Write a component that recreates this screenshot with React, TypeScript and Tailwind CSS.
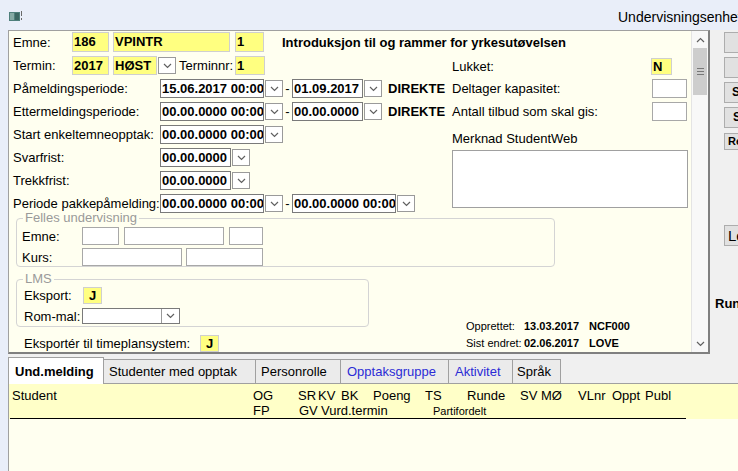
import React from "react";

function Chev({ up = false }: { up?: boolean }) {
  return (
    <svg width="9" height="6" viewBox="0 0 9 6" className="block">
      <path
        d={up ? "M1 5L4.5 1.5L8 5" : "M1 1L4.5 4.5L8 1"}
        fill="none"
        stroke="#606060"
        strokeWidth="1.2"
      />
    </svg>
  );
}

function DropBtn() {
  return (
    <div className="flex h-[17px] w-[18px] shrink-0 items-center justify-center border border-[#9a9a9a] bg-white">
      <Chev />
    </div>
  );
}

function DateF({ v, w }: { v: string; w: string }) {
  return (
    <div className="flex items-center gap-[1px]">
      <div
        className={`${w} h-[19px] overflow-hidden whitespace-nowrap border border-[#7a7a7a] bg-white pl-[1px] font-bold leading-[17px]`}
      >
        {v}
      </div>
      <DropBtn />
    </div>
  );
}

function Yel({ v, w, h, lh }: { v: string; w: string; h: string; lh: string }) {
  return (
    <div
      className={`${w} ${h} ${lh} shrink-0 border border-[#cfcfcf] bg-[#ffff80] pl-[1px] font-bold`}
    >
      {v}
    </div>
  );
}

function Box({ w, h }: { w: string; h: string }) {
  return <div className={`${w} ${h} shrink-0 border border-[#a8a8a8] bg-white`} />;
}

function Row({ label, children }: { label: string; children?: React.ReactNode }) {
  return (
    <div className="flex h-[19px] items-center">
      <span className="w-[147px] shrink-0 whitespace-nowrap">{label}</span>
      {children}
    </div>
  );
}

function Dash() {
  return <span className="w-[9px] shrink-0 text-center">-</span>;
}

function Tab({
  label,
  w,
  pl,
  color,
}: {
  label: string;
  w: string;
  pl: string;
  color: string;
}) {
  return (
    <div
      className={`${w} ${pl} ${color} flex h-[25px] shrink-0 items-center border-b border-r border-t border-[#a0a0a0] bg-[#ebebeb] whitespace-nowrap`}
    >
      {label}
    </div>
  );
}

export default function App() {
  return (
    <div className="relative h-[471px] w-[738px] overflow-hidden bg-[#e9eef9] font-['Liberation_Sans',Arial,sans-serif] text-[13px] leading-[15px] text-black">
      {/* Top bar */}
      <div className="flex h-[30px] items-start">
        <div className="ml-[9px] mt-[11px]">
          <svg width="14" height="11" viewBox="0 0 14 11" className="block">
            <rect x="0" y="1" width="11" height="9" fill="#4f7f7b" />
            <rect x="1" y="2" width="4" height="7" fill="#86aaa5" />
            <rect x="6" y="2" width="4" height="7" fill="#3c6662" />
            <rect x="12" y="0" width="1" height="5" fill="#6a6a6a" />
            <rect x="12" y="7" width="1" height="2" fill="#6a6a6a" />
          </svg>
        </div>
        <div className="ml-auto mt-[9px] w-[120px] overflow-hidden whitespace-nowrap text-[14px] leading-[16px]">
          Undervisningsenhet
        </div>
      </div>

      {/* Main row */}
      <div className="flex h-[324px]">
        <div className="w-[8px] shrink-0" />
        {/* Form panel with scrollbar */}
        <div className="flex h-[324px] w-[702px] shrink-0 border-b-2 border-l border-r-2 border-t border-b-[#808080] border-l-[#a0a0a0] border-r-[#808080] border-t-[#a0a0a0] bg-[#fffff0]">
          <div className="flex-1 overflow-hidden pl-[4px] pt-[1px]">
            {/* Row 1 */}
            <div className="flex h-[20px] items-center">
              <span className="w-[59px] shrink-0">Emne:</span>
              <Yel v="186" w="w-[37px]" h="h-[20px]" lh="leading-[18px]" />
              <div className="ml-[4px]">
                <Yel v="VPINTR" w="w-[117px]" h="h-[20px]" lh="leading-[18px]" />
              </div>
              <div className="ml-[5px]">
                <Yel v="1" w="w-[29px]" h="h-[20px]" lh="leading-[18px]" />
              </div>
              <span className="ml-[18px] whitespace-nowrap font-bold">
                Introduksjon til og rammer for yrkesutøvelsen
              </span>
            </div>

            {/* Block A */}
            <div className="mt-[4px] flex">
              <div className="flex w-[439px] shrink-0 flex-col gap-[4px]">
                <div className="flex h-[19px] items-center">
                  <span className="w-[59px] shrink-0">Termin:</span>
                  <Yel v="2017" w="w-[37px]" h="h-[19px]" lh="leading-[17px]" />
                  <div className="ml-[4px] flex items-center gap-[1px]">
                    <Yel v="HØST" w="w-[44px]" h="h-[19px]" lh="leading-[17px]" />
                    <DropBtn />
                  </div>
                  <span className="ml-[3px] w-[56px] shrink-0">Terminnr:</span>
                  <Yel v="1" w="w-[30px]" h="h-[19px]" lh="leading-[17px]" />
                </div>
                <Row label="Påmeldingsperiode:">
                  <DateF v="15.06.2017 00:00" w="w-[104px]" />
                  <Dash />
                  <DateF v="01.09.2017" w="w-[71px]" />
                  <span className="ml-[6px] font-bold">DIREKTE</span>
                </Row>
                <Row label="Ettermeldingsperiode:">
                  <DateF v="00.00.0000 00:00" w="w-[104px]" />
                  <Dash />
                  <DateF v="00.00.0000" w="w-[71px]" />
                  <span className="ml-[6px] font-bold">DIREKTE</span>
                </Row>
                <Row label="Start enkeltemneopptak:">
                  <DateF v="00.00.0000 00:00" w="w-[104px]" />
                </Row>
                <Row label="Svarfrist:">
                  <DateF v="00.00.0000" w="w-[71px]" />
                </Row>
                <Row label="Trekkfrist:">
                  <DateF v="00.00.0000" w="w-[71px]" />
                </Row>
                <Row label="Periode pakkepåmelding:">
                  <DateF v="00.00.0000 00:00" w="w-[104px]" />
                  <Dash />
                  <DateF v="00.00.0000 00:00" w="w-[104px]" />
                </Row>
              </div>

              <div className="flex flex-col">
                <div className="flex h-[21px] items-center">
                  <span className="w-[199px] shrink-0">Lukket:</span>
                  <Yel v="N" w="w-[21px]" h="h-[17px]" lh="leading-[15px]" />
                </div>
                <div className="flex h-[23px] items-center">
                  <span className="w-[200px] shrink-0">Deltager kapasitet:</span>
                  <Box w="w-[35px]" h="h-[19px]" />
                </div>
                <div className="flex h-[23px] items-center">
                  <span className="w-[200px] shrink-0">Antall tilbud som skal gis:</span>
                  <Box w="w-[35px]" h="h-[19px]" />
                </div>
                <div className="h-[27px] pt-[8px] leading-[15px]">Merknad StudentWeb</div>
                <div className="h-[58px] w-[236px] border border-[#a0a0a0] bg-white" />
              </div>
            </div>

            {/* Felles undervisning */}
            <fieldset className="ml-[3px] mt-[1px] w-[539px] rounded-[4px] border border-[#d4d4d4] pb-0 pl-[5px]">
              <legend className="ml-[1px] px-[2px] text-[13px] leading-[8px] text-[#9a9a9a]">
                Felles undervisning
              </legend>
              <div className="mt-[5px] flex h-[18px] items-center">
                <span className="w-[60px] shrink-0">Emne:</span>
                <Box w="w-[37px]" h="h-[18px]" />
                <div className="ml-[5px]">
                  <Box w="w-[100px]" h="h-[18px]" />
                </div>
                <div className="ml-[5px]">
                  <Box w="w-[34px]" h="h-[18px]" />
                </div>
              </div>
              <div className="mt-[3px] flex h-[18px] items-center">
                <span className="w-[60px] shrink-0">Kurs:</span>
                <Box w="w-[100px]" h="h-[18px]" />
                <div className="ml-[4px]">
                  <Box w="w-[77px]" h="h-[18px]" />
                </div>
              </div>
            </fieldset>

            {/* Block B */}
            <div className="flex">
              <div className="flex w-[453px] shrink-0 flex-col">
                <fieldset className="ml-[3px] mt-[8px] w-[353px] rounded-[4px] border border-[#d4d4d4] pb-[2px] pl-[7px]">
                  <legend className="ml-[-1px] px-[2px] text-[13px] leading-[8px] text-[#9a9a9a]">
                    LMS
                  </legend>
                  <div className="mt-[4px] flex h-[17px] items-center">
                    <span className="w-[59px] shrink-0">Eksport:</span>
                    <div className="flex h-[17px] w-[19px] items-center justify-center border border-[#cfcfcf] bg-[#ffff80] font-bold">
                      J
                    </div>
                  </div>
                  <div className="mt-[4px] flex h-[16px] items-center">
                    <span className="w-[58px] shrink-0">Rom-mal:</span>
                    <div className="flex h-[16px] w-[98px] items-center justify-end border border-[#7a7a7a] bg-white">
                      <div className="flex h-[14px] w-[18px] items-center justify-center border-l border-[#9a9a9a]">
                        <Chev />
                      </div>
                    </div>
                  </div>
                </fieldset>
                <div className="ml-[11px] mt-[8px] flex h-[17px] items-center">
                  <span className="w-[176px] shrink-0 whitespace-nowrap">
                    Eksportér til timeplansystem:
                  </span>
                  <div className="flex h-[17px] w-[19px] items-center justify-center border border-[#cfcfcf] bg-[#ffff80] font-bold">
                    J
                  </div>
                </div>
              </div>
              <div className="flex flex-col justify-end text-[11px]">
                <div className="flex h-[17px] items-center">
                  <span className="w-[58px] shrink-0">Opprettet:</span>
                  <span className="w-[65px] shrink-0 font-bold">13.03.2017</span>
                  <span className="font-bold">NCF000</span>
                </div>
                <div className="flex h-[17px] items-center">
                  <span className="w-[58px] shrink-0">Sist endret:</span>
                  <span className="w-[65px] shrink-0 font-bold">02.06.2017</span>
                  <span className="font-bold">LOVE</span>
                </div>
              </div>
            </div>
          </div>

          {/* Scrollbar */}
          <div className="flex w-[17px] shrink-0 flex-col border-l border-[#e4e4e4] bg-[#f8f8f8]">
            <div className="flex h-[17px] items-center justify-center">
              <Chev up />
            </div>
            <div className="mx-[1px] flex h-[47px] flex-col items-center justify-center gap-[2px] bg-[#cdcdcd]">
              <div className="h-[1px] w-[7px] bg-[#777]" />
              <div className="h-[1px] w-[7px] bg-[#777]" />
              <div className="h-[1px] w-[7px] bg-[#777]" />
            </div>
            <div className="flex-1" />
            <div className="flex h-[17px] items-center justify-center">
              <Chev />
            </div>
          </div>
        </div>

        {/* Right panel */}
        <div className="flex flex-1 flex-col bg-[#f0f0f0] pl-[5px] pt-[2px]">
          <div className="ml-[9px] h-[21px] w-[30px] border border-[#adadad] bg-[#e1e1e1]" />
          <div className="ml-[9px] mt-[4px] h-[21px] w-[30px] border border-[#adadad] bg-[#e1e1e1]" />
          <div className="ml-[9px] mt-[4px] h-[21px] w-[30px] border border-[#adadad] bg-[#e1e1e1] pl-[7px] text-[12px] font-bold leading-[19px]">
            S
          </div>
          <div className="ml-[9px] mt-[4px] h-[21px] w-[30px] border border-[#adadad] bg-[#e1e1e1] pl-[8px] text-[12px] font-bold leading-[19px]">
            S
          </div>
          <div className="ml-[9px] mt-[5px] h-[17px] w-[30px] border border-[#adadad] bg-[#e1e1e1] pl-[3px] text-[11px] font-bold leading-[15px]">
            Re
          </div>
          <div className="ml-[9px] mt-[75px] h-[21px] w-[30px] border border-[#adadad] bg-[#e1e1e1] pl-[3px] text-[15px] leading-[19px]">
            Le
          </div>
          <div className="mt-[50px] whitespace-nowrap font-bold leading-[16px]">Runde</div>
        </div>
      </div>

      {/* Tab strip */}
      <div className="ml-[8px] flex h-[30px] items-end bg-[#f0f0f0]">
        <div className="flex h-[27px] w-[96px] shrink-0 items-center border-l border-r border-t border-[#a0a0a0] bg-white pl-[6px] font-bold">
          Und.melding
        </div>
        <Tab label="Studenter med opptak" w="w-[152px]" pl="pl-[5px]" color="text-black" />
        <Tab label="Personrolle" w="w-[85px]" pl="pl-[5px]" color="text-black" />
        <Tab label="Opptaksgruppe" w="w-[108px]" pl="pl-[6px]" color="text-[#2b2bd6]" />
        <Tab label="Aktivitet" w="w-[64px]" pl="pl-[6px]" color="text-[#2b2bd6]" />
        <Tab label="Språk" w="w-[48px]" pl="pl-[4px]" color="text-black" />
        <div className="h-full flex-1 border-b border-[#a0a0a0]" />
      </div>

      {/* Table header */}
      <div className="ml-[8px] border-l border-[#a0a0a0] bg-[#ffffc8]">
        <div className="ml-[1px] w-[676px] border-b border-black pt-[4px]">
          <div className="flex h-[16px] items-center whitespace-nowrap pl-[2px] leading-[16px]">
            <span className="w-[241px] shrink-0">Student</span>
            <span className="w-[45px] shrink-0">OG</span>
            <span className="w-[20px] shrink-0">SR</span>
            <span className="w-[23px] shrink-0">KV</span>
            <span className="w-[32px] shrink-0">BK</span>
            <span className="w-[52px] shrink-0">Poeng</span>
            <span className="w-[42px] shrink-0">TS</span>
            <span className="w-[53px] shrink-0">Runde</span>
            <span className="w-[21px] shrink-0">SV</span>
            <span className="w-[37px] shrink-0">MØ</span>
            <span className="w-[34px] shrink-0">VLnr</span>
            <span className="w-[33px] shrink-0">Oppt</span>
            <span>Publ</span>
          </div>
          <div className="flex h-[14px] items-end whitespace-nowrap pl-[2px] leading-[14px]">
            <span className="w-[241px] shrink-0" />
            <span className="w-[46px] shrink-0">FP</span>
            <span className="w-[22px] shrink-0">GV</span>
            <span className="w-[112px] shrink-0">Vurd.termin</span>
            <span className="text-[11px] leading-[13px]">Partifordelt</span>
          </div>
        </div>
      </div>

      {/* Body */}
      <div className="ml-[8px] h-[60px] border-l border-[#a0a0a0] bg-[#fffff0]" />
    </div>
  );
}
